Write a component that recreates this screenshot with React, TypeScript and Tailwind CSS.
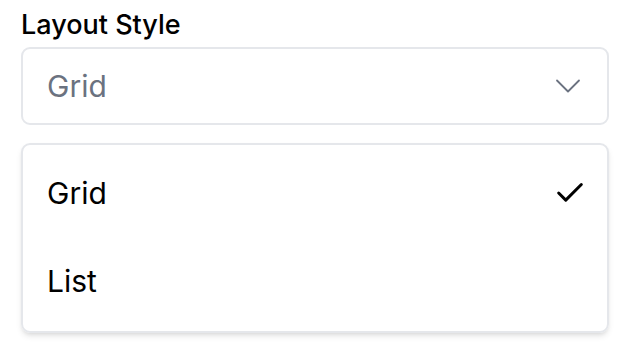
import { Check, ChevronDown } from "lucide-react";

const options = ["Grid", "List"];

function App() {
  const selected = "Grid";
  return (
    <div className="min-h-screen bg-white px-[21px] pt-[6px] font-['Inter',sans-serif]">
      <label className="block text-[27px] leading-[38px] font-medium text-black">Layout Style</label>
      <div className="mt-[3px] flex h-[78px] items-center justify-between rounded-[9px] border-2 border-[#e5e7eb] pl-[24px] pr-[17px]">
        <span className="text-[30px] text-[#6b7280]">{selected}</span>
        <ChevronDown className="h-[44px] w-[44px] text-[#6b7280]" strokeWidth={1} />
      </div>
      <ul className="mt-[18px] rounded-[9px] border-2 border-[#e5e7eb] pt-[4px] pb-[6px] shadow-md">
        {options.map((o) => (
          <li key={o} className="flex h-[88px] items-center justify-between pl-[24px] pr-[20px] text-[30px] text-black">
            <span>{o}</span>
            {o === selected && <Check className="h-[34px] w-[34px]" strokeWidth={2.1} />}
          </li>
        ))}
      </ul>
    </div>
  );
}

export default App;
